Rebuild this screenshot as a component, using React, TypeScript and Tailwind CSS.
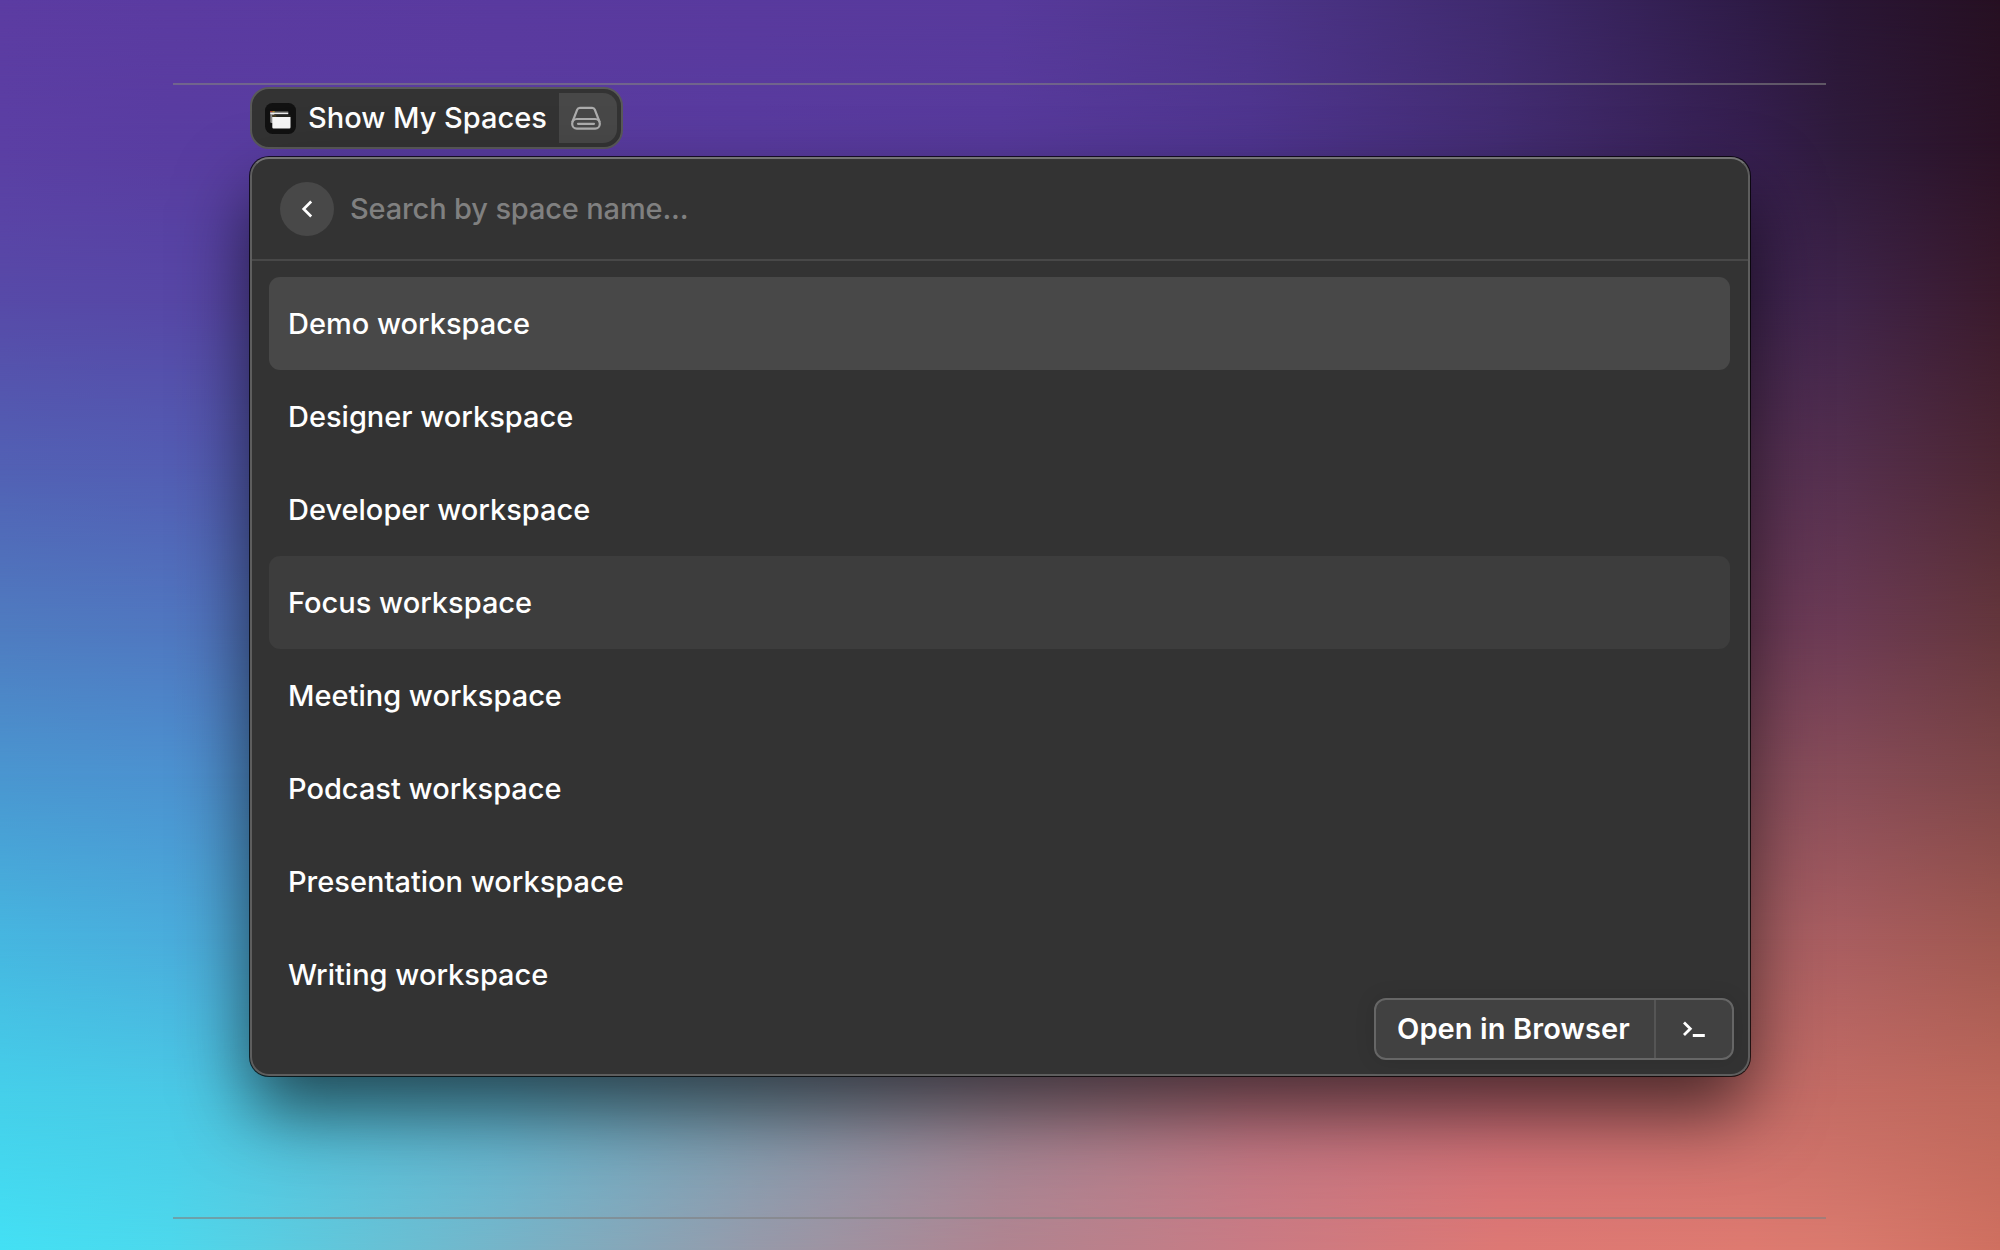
const COLUMNS = [0, 8.5, 25, 37.5, 50, 62.5, 75, 87.5, 92, 100];

// Colour mesh of the wallpaper: one horizontal ramp per stop on the vertical axis.
const MESH = [
  { y: 0, colors: ['#5c3ca2', '#5b3ba1', '#5a3a9f', '#593a9e', '#583a9c', '#4d358a', '#3f2a6e', '#2e1b46', '#2a1636', '#261022'] },
  { y: 12, colors: ['#5b3fa4', '#593da1', '#593ca0', '#593b9f', '#573a9c', '#4f3590', '#442d74', '#361f50', '#2f1b3c', '#2b1226'] },
  { y: 24, colors: ['#574aa8', '#5747a6', '#5844a0', '#57409f', '#553c96', '#4c3484', '#42296c', '#402552', '#3f244a', '#3a1a2c'] },
  { y: 37, colors: ['#5260b4', '#535db3', '#5750a8', '#57489f', '#584290', '#563880', '#58346c', '#583256', '#542f4e', '#4c2633'] },
  { y: 50, colors: ['#4f7bc0', '#5077c0', '#5865b4', '#6060a8', '#685898', '#704c88', '#704470', '#6e3c5a', '#6b3a54', '#64363c'] },
  { y: 62, colors: ['#4a96d0', '#4c92d0', '#5c80c0', '#6c78b4', '#7c6ca8', '#885c90', '#8c5478', '#8c5060', '#874c58', '#7e4648'] },
  { y: 75, colors: ['#46b6e0', '#4aaddc', '#5ca0cc', '#7494bc', '#8c84ac', '#9c7498', '#a86a7c', '#ac6266', '#a85d60', '#a05850'] },
  { y: 88, colors: ['#45d0ea', '#4acae6', '#62b8d4', '#80a0b4', '#a08898', '#c07684', '#cc6e78', '#c86e6a', '#c46c64', '#be685b'] },
  { y: 100, colors: ['#43e0f4', '#4dd8ec', '#76b4c8', '#969aaa', '#b08490', '#c97b84', '#dd7874', '#de7a70', '#da7a6e', '#cf7060'] },
];

const SPACES = ['Demo', 'Designer', 'Developer', 'Focus', 'Meeting', 'Podcast', 'Presentation', 'Writing'];

function Wallpaper() {
  return (
    <div className="absolute inset-0">
      {MESH.map((row, i) => {
        const mask = i === 0 ? undefined : `linear-gradient(to bottom, transparent ${MESH[i - 1].y}%, black ${row.y}%)`;
        const stops = row.colors.map((c, k) => `${c} ${COLUMNS[k]}%`).join(', ');
        return (
          <div
            key={row.y}
            className="absolute inset-0"
            style={{ backgroundImage: `linear-gradient(to right, ${stops})`, maskImage: mask }}
          />
        );
      })}
    </div>
  );
}

function SpacesIcon() {
  return (
    <svg width="31" height="31" viewBox="0 0 31 31" className="shrink-0">
      <rect width="31" height="31" rx="7.5" fill="#111" />
      <path d="M5.300 8h4v12h-3a1 1 0 0 1-1-1z" fill="#8a8a8a" />
      <path d="M5.300 8h18v1.500h-18z" fill="#4c4c48" />
      <path d="M5.300 9.500h18v1.700h-18z" fill="#ececec" />
      <path d="M5.300 8h2.200v1.200H5.300z" fill="#b5402f" />
      <path d="M7.500 8h2.200v1.200H7.500z" fill="#a88a28" />
      <path d="M7.300 14h18.200v10.300a1.200 1.200 0 0 1-1.200 1.200H8.500a1.200 1.200 0 0 1-1.200-1.200z" fill="#f6f6f6" />
      <path d="M7.300 12h18.200v2H7.300z" fill="#24241f" />
      <path d="M7.300 12.300h4v1.200h-4z" fill="#5c4a24" />
    </svg>
  );
}

function DriveIcon() {
  return (
    <svg width="30" height="24" viewBox="0 0 30 24" fill="none" stroke="#adadad" strokeWidth="2.200" strokeLinecap="round" strokeLinejoin="round" className="mr-1">
      <path d="M1.600 15.500 6.200 3.600A2.800 2.800 0 0 1 8.800 1.800h12.400a2.800 2.800 0 0 1 2.600 1.800l4.600 11.900" />
      <rect x="1.200" y="13" width="27.600" height="9.600" rx="4.600" />
      <path d="M7 17.800h16" />
    </svg>
  );
}

export default function App() {
  return (
    <div className="relative h-[1250px] w-[2000px] overflow-hidden font-['Inter',sans-serif] text-[29px] font-medium text-white">
      <Wallpaper />
      <div className="relative ml-[173px] flex h-full w-[1653px] flex-col pt-[83px]">
        <div className="h-0.5 w-full shrink-0 bg-[#808080]/60" />

        <div className="mt-[2px] ml-[77px] flex h-[62px] w-[373px] shrink-0 items-center rounded-[19px] border-2 border-[#595959] bg-[#333333] pr-1 pl-[13px]">
          <SpacesIcon />
          <span className="ml-3 whitespace-nowrap">Show My Spaces</span>
          <div className="ml-auto flex h-[50px] w-[58px] items-center justify-center rounded-r-[14px] bg-[#484848]">
            <DriveIcon />
          </div>
        </div>

        <main className="mt-[8px] ml-[77px] flex h-[919px] w-[1500px] shrink-0 flex-col rounded-[19px] border-2 border-[#5e5e5e] border-t-[#747474] bg-[#333333] shadow-[0_0_0_1px_rgba(0,0,0,0.75),0_36px_72px_0_rgba(0,0,0,0.62)]">
          <header className="flex h-[102px] shrink-0 items-center border-b-2 border-[#484848] pl-7">
            <button className="flex size-[54px] items-center justify-center rounded-full bg-[#484848] pr-px">
              <svg width="12" height="18" viewBox="0 0 12 18" fill="none" stroke="white" strokeWidth="2.700">
                <path d="M10.200 1.500 2.700 9l7.500 7.500" />
              </svg>
            </button>
            <span className="ml-4 font-[450] tracking-[-0.15px] text-[#808080]">Search by space name...</span>
          </header>

          <ul className="flex flex-col pt-4 pr-[18px] pl-[17px]">
            {SPACES.map((name) => (
              <li
                key={name}
                className={`flex h-[93px] items-center rounded-[11px] pl-[19px] ${name === 'Demo' ? 'bg-[#484848]' : name === 'Focus' ? 'bg-[#3d3d3d]' : ''}`}
              >
                {name} workspace
              </li>
            ))}
          </ul>

          <div className="-mt-[23px] mr-[14px] flex h-[62px] w-[360px] items-stretch self-end rounded-xl border-2 border-[#666666] bg-[#414141] shadow-[0_0_20px_rgba(0,0,0,0.12)]">
            <button className="flex flex-1 items-center pb-px pl-[21px] font-semibold tracking-[0.1px] whitespace-nowrap">Open in Browser</button>
            <button className="flex w-[78px] items-center justify-center border-l-2 border-[#555555]">
              <svg width="24" height="18" viewBox="0 0 24 18" fill="none" stroke="white" strokeWidth="2.800">
                <path d="M2 2.500 8.300 8.800 2 15.100M10.800 15.500h12" />
              </svg>
            </button>
          </div>
        </main>

        <div className="mt-[141px] h-0.5 w-full shrink-0 bg-[#808080]/60" />
      </div>
    </div>
  );
}
